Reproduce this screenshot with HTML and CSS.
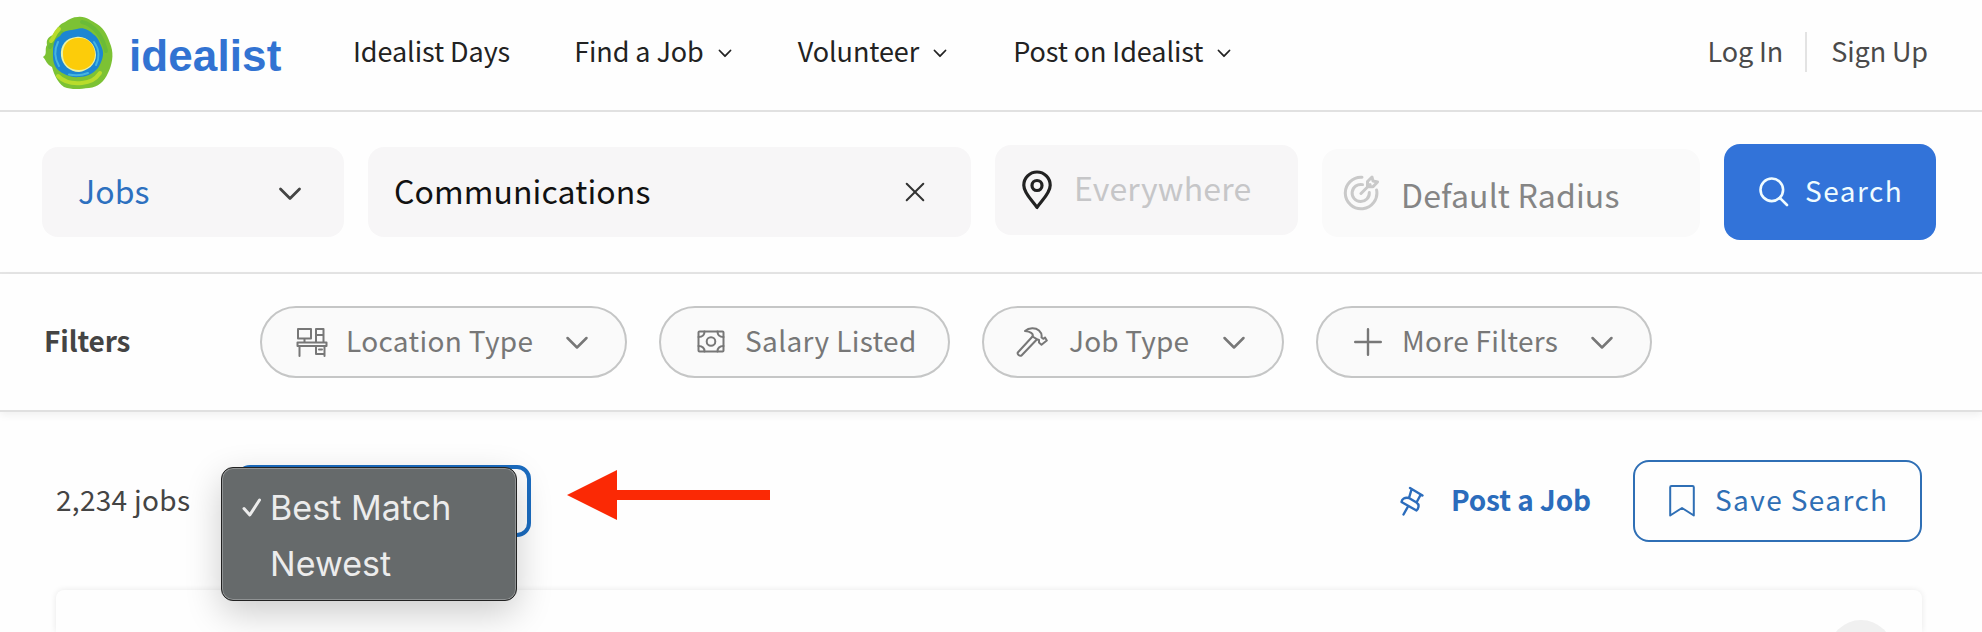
FILE: index.html
```
<!DOCTYPE html>
<html lang="en">
<head>
    <meta charset="UTF-8">
    <title>Idealist - Job Search</title>
    <meta name="viewport" content="width=device-width, initial-scale=1.0">
    <link rel="stylesheet" href="styles.css">
</head>
<body>

    <header class="header">
        <a class="logo" href="#">
            <svg class="logo-mark" width="72" height="74" viewBox="0 0 72 74">
                <path fill="#7cc234" d="M36 1C44 0 49 5 55 8C63 13 66 21 69 30C72 39 70 49 66 57C62 66 56 71 47 72C38 73 30 74 22 71C15 66 12 58 10 51C5 49 4 44 1 41C6 38 2 33 5 29C4 24 6 21 11 19C15 13 17 8 23 6C27 3 31 1 36 1Z"/>
                <path fill="none" stroke="#6abb38" stroke-width="4" d="M40 6C53 9 61 22 64 35M8 31C12 25 14 21 20 17"/>
                <path fill="none" stroke="#b9dc2c" stroke-width="4" stroke-linecap="round" d="M17 13C12 18 12 22 9 25M16 60C22 66 31 68 40 67C48 66 53 64 58 57"/>
                <path fill="#1c86d3" d="M35 13C41 11 47 14 51 18C56 21 58 27 60 32C63 39 59 47 56 52C51 58 44 61 37 61C29 62 21 58 16 54C10 48 11 40 11 33C12 27 12 23 18 20C22 13 28 15 35 13Z"/>
                <path fill="none" stroke="#46b5de" stroke-width="2" stroke-linecap="round" d="M16 26C12 34 13 43 17 50M52 26C58 34 57 43 54 49M27 58.5C34 60 41 59 46 57"/>
                <path fill="#e9f2a8" d="M34 21C44 19 54 28 54 39C54 49 45 55 37 56C28 56 20 49 19 40C18 29 24 22 34 21Z"/>
                <path fill="#fccc0a" d="M36 22C46 21 53 29 53 38C53 48 45 54 37 54C28 54 21 48 21 39C20 29 27 22 36 22Z"/>
            </svg>
            <span class="logo-text">idealist</span>
        </a>
        <nav class="nav">
            <a href="#">Idealist Days</a>
            <a href="#">Find a Job
                <svg class="caret" width="14" height="9" viewBox="0 0 14 9"><path d="M1.5 1.5L7 7.2L12.5 1.5"/></svg>
            </a>
            <a href="#">Volunteer
                <svg class="caret" width="14" height="9" viewBox="0 0 14 9"><path d="M1.5 1.5L7 7.2L12.5 1.5"/></svg>
            </a>
            <a href="#">Post on Idealist
                <svg class="caret" width="14" height="9" viewBox="0 0 14 9"><path d="M1.5 1.5L7 7.2L12.5 1.5"/></svg>
            </a>
        </nav>
        <div class="account">
            <a href="#">Log In</a>
            <a href="#">Sign Up</a>
        </div>
    </header>

    <form class="search-bar">
        <div class="field field-type">
            <span class="label">Jobs</span>
            <svg class="chevron" width="24" height="14" viewBox="0 0 24 14"><path d="M2.5 2L12 11.5L21.5 2"/></svg>
        </div>
        <div class="field field-keyword">
            <span class="label">Communications</span>
            <svg class="clear" width="20" height="20" viewBox="0 0 20 20"><path d="M1.7 1.7L18.3 18.3M18.3 1.7L1.7 18.3"/></svg>
        </div>
        <div class="field field-place">
            <svg class="pin" width="32" height="40" viewBox="0 0 32 40">
                <path d="M16 37.5C12 31 2.8 23.5 2.8 15.2A13.2 13.2 0 0 1 29.2 15.2C29.2 23.5 20 31 16 37.5Z"/>
                <circle cx="16" cy="15.5" r="5"/>
            </svg>
            <span class="label">Everywhere</span>
        </div>
        <div class="field field-radius">
            <svg class="target" width="36" height="36" viewBox="0 0 36 36">
                <path d="M19 2.2A15.8 15.8 0 1 0 33.6 15"/>
                <path d="M19.5 9.6A8.6 8.6 0 1 0 26.3 17.5"/>
                <path d="M18 18.5L27 9.5M24.5 12V6.5L29 2L30 6L34.5 7L30 11.8H24.5"/>
            </svg>
            <span class="label">Default Radius</span>
        </div>
        <button class="search-btn" type="button">
            <svg width="30" height="30" viewBox="0 0 30 30"><circle cx="12.8" cy="12.8" r="11.3"/><path d="M20.8 20.8L28 28"/></svg>
            <span class="label">Search</span>
        </button>
    </form>

    <section class="filters">
        <h2>Filters</h2>
        <button class="pill pill-location">
            <svg class="icon" width="32" height="30" viewBox="0 0 32 30">
                <path d="M2 2H15V11.5H2ZM8.5 11.5V15.5M20 15.5V2H27.5V15.5M20 8H27.5M1.5 15.5H30.5V19H1.5ZM3.5 19V29M28.5 19V29M20 19V27H28.5M23 22.5H26"/>
            </svg>
            <span class="label">Location Type</span>
            <svg class="chevron" width="24" height="14" viewBox="0 0 24 14"><path d="M2.5 2L12 11.5L21.5 2"/></svg>
        </button>
        <button class="pill pill-salary">
            <svg class="icon" width="28" height="24" viewBox="0 0 28 24">
                <rect x="1.5" y="1.5" width="25" height="20" rx="1"/>
                <path d="M7.5 1.5C7.5 5 5 7 1.5 7M20.5 1.5C20.5 5 23 7 26.5 7M7.5 21.5C7.5 18 5 16 1.5 16M20.5 21.5C20.5 18 23 16 26.5 16"/>
                <circle cx="14" cy="11.5" r="4.3"/>
            </svg>
            <span class="label">Salary Listed</span>
        </button>
        <button class="pill pill-type">
            <svg class="icon" width="32" height="30" viewBox="0 0 32 30">
                <path d="M9 4C13 .5 19.5 .5 23 3.5C25.5 5.8 26 8 25.5 10.5L27.5 11.8L29 10.5L30.8 13.5L25.5 17.8L23 15.5V13L20.8 12.2L16.5 9.5C18 6.5 14 4.5 9 4Z"/>
                <path d="M16.5 9.5L1.8 25.5C1 27 3.5 29.5 5.5 28.5L20.8 12.5"/>
            </svg>
            <span class="label">Job Type</span>
            <svg class="chevron" width="24" height="14" viewBox="0 0 24 14"><path d="M2.5 2L12 11.5L21.5 2"/></svg>
        </button>
        <button class="pill pill-more">
            <svg class="icon plus" width="28" height="28" viewBox="0 0 28 28"><path d="M14 1.2V26.8M1.2 14H26.8"/></svg>
            <span class="label">More Filters</span>
            <svg class="chevron" width="24" height="14" viewBox="0 0 24 14"><path d="M2.5 2L12 11.5L21.5 2"/></svg>
        </button>
    </section>

    <main class="results">
        <div class="toolbar">
            <span class="count label">2,234 jobs</span>
            <div class="sort">
                <ul class="sort-menu">
                    <li>
                        <svg width="20" height="20" viewBox="0 0 20 20"><path d="M2 10.5L7.8 17L17.5 2"/></svg>
                        Best Match
                    </li>
                    <li>Newest</li>
                </ul>
            </div>
            <svg class="arrow" width="204" height="52" viewBox="0 0 204 52">
                <path d="M0 26L50 1V21H203V31H50V51Z"/>
            </svg>
            <a class="post-job" href="#">
                <svg width="26" height="30" viewBox="0 0 26 30">
                    <path d="M11 2L23.5 9.5M12.5 3.5L10 12M21.5 9L17.5 16.5M10 12C5.5 11 3 13 2.5 16L17.5 24.5C20 22 20.5 18.5 17.5 16.5ZM9 20.5L4.5 28.5"/>
                </svg>
                <span class="label">Post a Job</span>
            </a>
            <button class="save-btn">
                <svg width="28" height="34" viewBox="0 0 28 34"><path d="M3.5 2H24.5Q25.8 2 25.8 3.3V31.5L14 24L2.2 31.5V3.3Q2.2 2 3.5 2Z"/></svg>
                <span class="label">Save Search</span>
            </button>
        </div>
        <article class="card">
            <div class="card-top"><span class="card-badge"></span></div>
        </article>
    </main>

</body>
</html>
```
FILE: styles.css
```
* {
    box-sizing: border-box;
}

body {
    margin: 0;
    height: 632px;
    overflow: hidden;
    background: #fefefe;
    font-family: "Noto Sans CJK SC", "Open Sans", sans-serif;
    color: #444;
}

a {
    color: inherit;
    text-decoration: none;
}

button {
    font-family: inherit;
    cursor: pointer;
}

svg {
    flex: none;
    fill: none;
    stroke: currentColor;
    stroke-width: 2;
    stroke-linecap: round;
    stroke-linejoin: round;
}

.label {
    line-height: 40px;
    padding-bottom: 5px;
    white-space: nowrap;
}

/* header */
.header {
    display: flex;
    align-items: center;
    height: 112px;
    padding: 0 54px 0 42px;
    border-bottom: 2px solid #e1e1e1;
}

.logo {
    display: flex;
    align-items: center;
    width: 311px;
    padding-bottom: 5px;
}

.logo-mark {
    stroke: none;
}

.logo-text {
    margin-left: 15px;
    font: bold 44px/50px "Liberation Sans", sans-serif;
    letter-spacing: 0.1px;
    color: #3273d2;
    padding-top: 6px;
}

.nav {
    display: flex;
    gap: 66px;
    padding-bottom: 8px;
    font-size: 27px;
    line-height: 40px;
    letter-spacing: -0.08px;
    color: #222;
}

.nav a {
    display: flex;
    align-items: center;
    white-space: nowrap;
}

.nav a:first-child {
    margin-right: -2px;
}

.caret {
    margin: 5px 0 0 14px;
    stroke-width: 1.8;
}

.account {
    display: flex;
    margin-left: auto;
    padding-bottom: 6px;
    font-size: 27px;
    letter-spacing: -0.1px;
    color: #4a4a4a;
}

.account a {
    height: 40px;
    line-height: 38px;
}

.account a + a {
    margin-left: 22px;
    padding-left: 24px;
    border-left: 2px solid #e3e3e3;
}

/* search */
.search-bar {
    display: flex;
    align-items: center;
    gap: 24px;
    height: 162px;
    padding-left: 42px;
    border-bottom: 2px solid #e5e5e5;
}

.field {
    display: flex;
    align-items: center;
    height: 90px;
    border-radius: 16px;
    background: #f7f6f7;
    font-size: 32px;
    letter-spacing: 0.1px;
}

.field-type {
    width: 302px;
    padding: 0 42px 0 36px;
    justify-content: space-between;
    color: #2d70bf;
}

.field-type .chevron {
    margin-top: 4px;
    color: #444;
    stroke-width: 2.8;
}

.field-keyword {
    width: 603px;
    padding: 0 46px 0 26px;
    justify-content: space-between;
    color: #111;
}

.clear {
    color: #333;
}

.field-place {
    width: 303px;
    margin-bottom: 5px;
    padding-left: 26px;
    color: #c6c6c8;
}

.field-place .label {
    margin-left: 21px;
    letter-spacing: 0.2px;
}

.pin {
    color: #222;
    stroke-width: 3.2;
}

.field-radius {
    width: 378px;
    height: 88px;
    margin-top: 1px;
    padding-left: 21px;
    background: #fafafa;
    color: #858585;
}

.field-radius .label {
    margin-left: 22px;
    padding: 2px 0 0;
    letter-spacing: 0.15px;
}

.target {
    color: #c9c9c9;
    stroke-width: 3;
}

.search-btn {
    display: flex;
    align-items: center;
    width: 212px;
    height: 96px;
    padding: 0 0 0 35px;
    border: 0;
    border-radius: 16px;
    background: #3273d9;
    color: #f0fcff;
    font-size: 28px;
    letter-spacing: 1.5px;
}

.search-btn svg {
    stroke-width: 2.6;
}

.search-btn .label {
    margin-left: 16px;
}

/* filters */
.filters {
    display: flex;
    align-items: center;
    height: 138px;
    padding-left: 44px;
    border-bottom: 2px solid #e0e0e0;
    box-shadow: 0 3px 8px rgba(0, 0, 0, 0.06);
}

.filters h2 {
    width: 216px;
    margin: 0;
    padding-bottom: 5px;
    font-size: 28px;
    line-height: 40px;
    letter-spacing: -0.1px;
}

.pill {
    display: flex;
    align-items: center;
    height: 72px;
    margin-right: 32px;
    padding: 0 36px 0 34px;
    border: 2px solid #c5c6c6;
    border-radius: 36px;
    background: #fafafa;
    color: #777;
    font-size: 28px;
    letter-spacing: 0.35px;
}

.pill .chevron {
    margin: 2px 0 0 auto;
    stroke-width: 2.5;
}

.pill .plus {
    stroke-width: 2.4;
}

.pill-location {
    width: 367px;
}

.pill-location .label {
    margin-left: 18px;
}

.pill-salary {
    width: 291px;
    padding-left: 36px;
}

.pill-salary .label {
    margin-left: 20px;
}

.pill-type {
    width: 302px;
    padding-left: 32px;
}

.pill-type .label {
    margin-left: 21px;
    letter-spacing: 0.2px;
}

.pill-more {
    width: 336px;
    padding-left: 36px;
}

.pill-more .label {
    margin-left: 20px;
    letter-spacing: 0.3px;
}

/* results */
.results {
    padding: 48px 60px 0 56px;
}

.toolbar {
    display: flex;
    align-items: center;
    height: 82px;
    font-size: 28px;
}

.count {
    width: 180px;
    letter-spacing: 0.3px;
}

.sort {
    position: relative;
    width: 295px;
    height: 72px;
    border: 4px solid #1b6cc0;
    border-radius: 14px;
}

/* open dropdown, covers most of the select */
.sort-menu {
    position: absolute;
    z-index: 2;
    top: -2px;
    left: -19px;
    width: 296px;
    height: 134px;
    margin: 0;
    padding: 12px 0 0 20px;
    list-style: none;
    border: 1px solid #222;
    border-radius: 12px;
    background: #666a6b;
    box-shadow: inset 0 0 0 1px #8f9293, 0 12px 36px rgba(0, 0, 0, 0.2);
    color: #ececec;
    font: 34px/56px Inter, sans-serif;
    letter-spacing: 0.05px;
}

.sort-menu li {
    display: flex;
    align-items: center;
    height: 56px;
    padding-left: 28px;
}

.sort-menu li:first-child {
    padding-left: 0;
}

.sort-menu svg {
    margin-right: 8px;
    stroke-width: 3;
}

.arrow {
    margin: -12px 0 0 36px;
    fill: #fb2905;
    stroke: none;
}

.post-job {
    display: flex;
    align-items: center;
    margin-left: auto;
    color: #2b6cbc;
    font-weight: bold;
    letter-spacing: -0.1px;
}

.post-job .label {
    margin-left: 26px;
}

.post-job svg {
    stroke-width: 2.4;
}

.save-btn {
    display: flex;
    align-items: center;
    width: 289px;
    height: 82px;
    margin-left: 42px;
    padding: 0 0 0 33px;
    border: 2px solid #2f6fb5;
    border-radius: 16px;
    background: transparent;
    color: #2f6fb5;
    font-size: 28px;
    letter-spacing: 1.4px;
}

.save-btn .label {
    margin-left: 19px;
}

.card {
    height: 42px;
    margin-top: 48px;
    border-radius: 8px 8px 0 0;
    background: #fefefe;
    box-shadow: 0 0 6px rgba(0, 0, 0, 0.09);
}

.card-top {
    display: flex;
    justify-content: flex-end;
    height: 42px;
    padding: 30px 29px 0 0;
    overflow: hidden;
}

.card-badge {
    flex: none;
    width: 64px;
    height: 64px;
    border-radius: 50%;
    background: #f0f0f0;
}
```
